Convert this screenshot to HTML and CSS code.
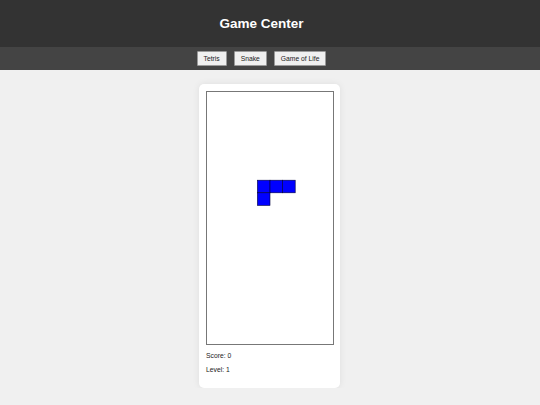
FILE: index.html
```html
<!DOCTYPE html>
<html lang="en">
<head>
<meta charset="utf-8">
<title>Game Center</title>
<link rel="stylesheet" href="styles.css">
</head>
<body>
<header class="top">
  <h1 class="title">Game Center</h1>
</header>
<nav class="nav">
  <button class="nav-btn">Tetris</button>
  <button class="nav-btn">Snake</button>
  <button class="nav-btn">Game of Life</button>
</nav>
<main class="main">
  <section class="card">
    <div class="board">
      <svg class="board-svg" width="126" height="252" viewBox="0 0 126 252">
        <g fill="#0000ff" stroke="#00003a" stroke-width="0.6">
          <rect x="50.4" y="88.2" width="12.6" height="12.6"/>
          <rect x="63" y="88.2" width="12.6" height="12.6"/>
          <rect x="75.6" y="88.2" width="12.6" height="12.6"/>
          <rect x="50.4" y="100.8" width="12.6" height="12.6"/>
        </g>
      </svg>
    </div>
    <p class="stat">Score: 0</p>
    <p class="stat">Level: 1</p>
  </section>
</main>
</body>
</html>
```
FILE: styles.css
```css
* { box-sizing: border-box; }
html, body {
  margin: 0;
  padding: 0;
}
body {
  background: #f0f0f0;
  font-family: "Liberation Sans", Arial, sans-serif;
  color: #333;
}
.top {
  background: #333333;
  height: 47px;
  display: flex;
  align-items: center;
  justify-content: center;
  padding-right: 17px;
}
.title {
  margin: 0;
  color: #ffffff;
  font-size: 13.5px;
  font-weight: bold;
}
.nav {
  background: #444444;
  height: 23px;
  display: flex;
  align-items: center;
  justify-content: center;
  gap: 7px;
  padding-right: 17px;
}
.nav-btn {
  font-family: "Liberation Sans", Arial, sans-serif;
  font-size: 6.75px;
  color: #222;
  background: #f0f0f0;
  border: 1px solid #9a9a9a;
  border-radius: 1px;
  padding: 0 6px;
  height: 15px;
  line-height: 13px;
  margin: 0;
}
.main {
  display: flex;
  justify-content: center;
  padding-top: 14px;
}
.card {
  width: 141px;
  margin-right: 1px;
  background: #ffffff;
  border-radius: 5px;
  padding: 7px 7px 9px;
  box-shadow: 0 0 7px rgba(0, 0, 0, 0.08);
}
.board {
  width: 128px;
  height: 254px;
  border: 1px solid #777;
  margin-bottom: 4px;
}
.board-svg {
  display: block;
}
.stat {
  font-size: 6.75px;
  margin: 6.75px 0;
  color: #222;
}
```
